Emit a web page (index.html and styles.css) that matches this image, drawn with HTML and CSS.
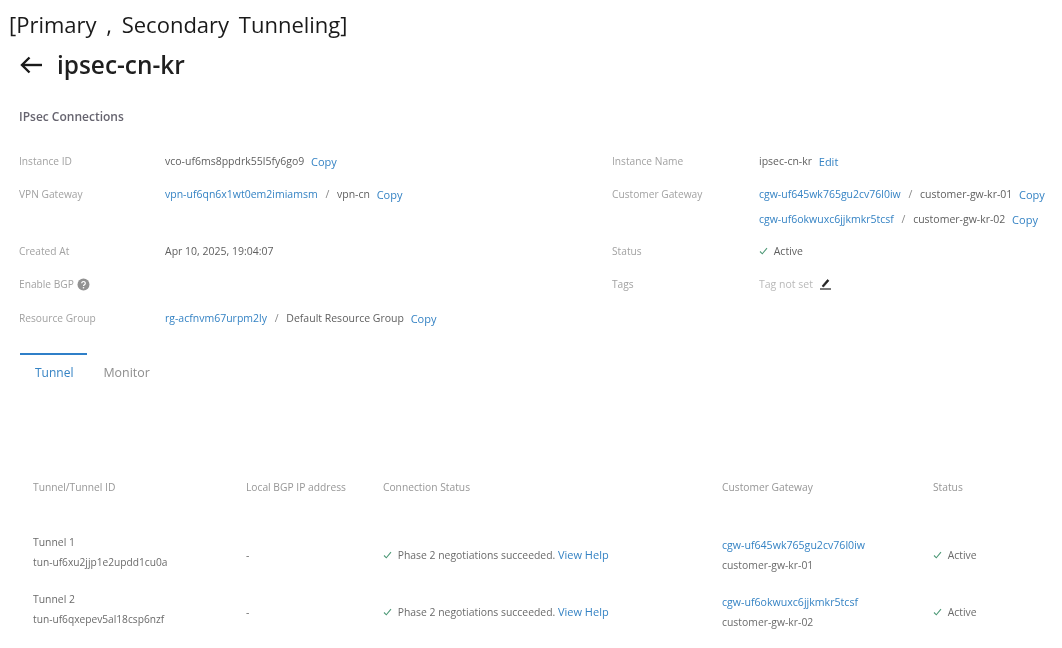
FILE: index.html
```html
<!DOCTYPE html>
<html lang="en">
<head>
  <meta charset="UTF-8" />
  <meta name="viewport" content="width=device-width, initial-scale=1.0"/>
  <title>ipsec-cn-kr</title>
  <link rel="stylesheet" href="styles.css">
</head>
<body>
  <p class="caption">[Primary , Secondary Tunneling]</p>

  <header class="page-head">
    <svg class="back-icon" width="24" height="20" viewBox="0 0 24 20" fill="none" stroke="#1a1a1a" stroke-width="2.4">
      <path d="M23 10H3"/>
      <path d="M10.500 2.500L3 10l7.500 7.500"/>
    </svg>
    <h1>ipsec-cn-kr</h1>
  </header>

  <h2 class="section-title">IPsec Connections</h2>

  <div class="details">
    <div class="row">
      <div class="label">Instance ID</div>
      <div class="value">vco-uf6ms8ppdrk55l5fy6go9 <a class="action">Copy</a></div>
      <div class="label">Instance Name</div>
      <div class="value">ipsec-cn-kr <a class="action">Edit</a></div>
    </div>
    <div class="row row-tall">
      <div class="label">VPN Gateway</div>
      <div class="value"><a>vpn-uf6qn6x1wt0em2imiamsm</a> <span class="sep">/</span> vpn-cn <a class="action">Copy</a></div>
      <div class="label">Customer Gateway</div>
      <div class="value stack">
        <div><a>cgw-uf645wk765gu2cv76l0iw</a> <span class="sep">/</span> customer-gw-kr-01 <a class="action">Copy</a></div>
        <div><a>cgw-uf6okwuxc6jjkmkr5tcsf</a> <span class="sep">/</span> customer-gw-kr-02 <a class="action">Copy</a></div>
      </div>
    </div>
    <div class="row">
      <div class="label">Created At</div>
      <div class="value">Apr 10, 2025, 19:04:07</div>
      <div class="label">Status</div>
      <div class="value">
        <svg class="check" width="9" height="8" viewBox="0 0 9 8" fill="none" stroke="#4f9a78" stroke-width="1.100"><path d="M1 4.500L3.300 6.800L8 1.200"/></svg>
        Active
      </div>
    </div>
    <div class="row row-bgp">
      <div class="label">Enable BGP
        <svg class="help" width="13" height="13" viewBox="0 0 13 13">
          <circle cx="6.500" cy="6.500" r="6" fill="#929292"/>
          <path d="M4.700 5.200a1.800 1.700 0 1 1 2.700 1.500c-.6.400-.9.600-.9 1.300" fill="none" stroke="#fff" stroke-width="1.200"/>
          <circle cx="6.500" cy="9.800" r=".8" fill="#fff"/>
        </svg>
      </div>
      <div class="value"></div>
      <div class="label">Tags</div>
      <div class="value muted">Tag not set
        <svg class="pen" width="13" height="12" viewBox="0 0 13 12" fill="none" stroke="#222">
          <path d="M3 8L8.500 1.500L10 2.800L4.500 9Z" fill="#222" stroke-width=".6"/>
          <path d="M1 11H12" stroke-width="1.200"/>
        </svg>
      </div>
    </div>
    <div class="row">
      <div class="label">Resource Group</div>
      <div class="value value-wide"><a>rg-acfnvm67urpm2ly</a> <span class="sep">/</span> Default Resource Group <a class="action">Copy</a></div>
    </div>
  </div>

  <nav class="tabs">
    <a class="tab tab-active">Tunnel</a>
    <a class="tab">Monitor</a>
  </nav>

  <table class="tunnels">
    <thead>
      <tr>
        <th class="col-name">Tunnel/Tunnel ID</th>
        <th class="col-bgp">Local BGP IP address</th>
        <th class="col-conn">Connection Status</th>
        <th class="col-gw">Customer Gateway</th>
        <th>Status</th>
      </tr>
    </thead>
    <tbody>
      <tr>
        <td class="cell-name"><div>Tunnel 1</div><div class="tunnel-id">tun-uf6xu2jjp1e2updd1cu0a</div></td>
        <td>-</td>
        <td><svg class="check" width="9" height="8" viewBox="0 0 9 8" fill="none" stroke="#4f9a78" stroke-width="1.100"><path d="M1 4.500L3.300 6.800L8 1.200"/></svg> Phase 2 negotiations succeeded. <a class="help-link">View Help</a></td>
        <td><div><a>cgw-uf645wk765gu2cv76l0iw</a></div><div>customer-gw-kr-01</div></td>
        <td><svg class="check" width="9" height="8" viewBox="0 0 9 8" fill="none" stroke="#4f9a78" stroke-width="1.100"><path d="M1 4.500L3.300 6.800L8 1.200"/></svg> Active</td>
      </tr>
      <tr>
        <td class="cell-name"><div>Tunnel 2</div><div class="tunnel-id">tun-uf6qxepev5al18csp6nzf</div></td>
        <td>-</td>
        <td><svg class="check" width="9" height="8" viewBox="0 0 9 8" fill="none" stroke="#4f9a78" stroke-width="1.100"><path d="M1 4.500L3.300 6.800L8 1.200"/></svg> Phase 2 negotiations succeeded. <a class="help-link">View Help</a></td>
        <td><div><a>cgw-uf6okwuxc6jjkmkr5tcsf</a></div><div>customer-gw-kr-02</div></td>
        <td><svg class="check" width="9" height="8" viewBox="0 0 9 8" fill="none" stroke="#4f9a78" stroke-width="1.100"><path d="M1 4.500L3.300 6.800L8 1.200"/></svg> Active</td>
      </tr>
    </tbody>
  </table>
</body>
</html>
```

FILE: styles.css
```css
body {
  margin: 0;
  height: 648px;
  overflow: hidden;
  background-color: #ffffff;
  color: #5f5f5f;
  font-family: "Open Sans", "Noto Sans", sans-serif;
  font-size: 10.5px;
  line-height: 16px;
  filter: blur(0.35px);
}
a {
  color: #3583c4;
}
.caption {
  margin: 0;
  padding: 9px 0 0 9px;
  height: 31px;
  font-size: 22px;
  line-height: 30px;
  color: #1a1a1a;
  word-spacing: 4px;
}
.page-head {
  display: flex;
  align-items: center;
  gap: 14px;
  padding: 5px 0 0 19px;
  height: 40px;
}
.page-head h1 {
  margin: 0;
  font-size: 24.4px;
  line-height: 40px;
  font-weight: 600;
  color: #1f1f1f;
}
.section-title {
  margin: 0;
  padding: 23px 0 0 19px;
  font-size: 12px;
  line-height: 18px;
  font-weight: 600;
  color: #66646f;
}
.details {
  padding: 27px 0 0 19px;
}
.row {
  display: grid;
  grid-template-columns: 146px 447px 147px 1fr;
  height: 33px;
  align-items: start;
}
.row-tall {
  height: 57px;
}
.row-bgp {
  height: 34px;
}
.label {
  font-size: 10.2px;
  color: #a2a2a2;
}
.value-wide {
  grid-column: 2 / 5;
}
.stack div {
  height: 25px;
}
.sep {
  margin: 0 5px;
  color: #888888;
}
.action {
  margin-left: 4px;
  font-size: 11px;
  vertical-align: -1px;
}
.muted {
  color: #b9b9b9;
}
.check {
  margin-right: 3px;
}
.help {
  vertical-align: -3px;
}
.pen {
  margin-left: 3px;
  vertical-align: -2px;
}
.tabs {
  display: flex;
  gap: 16px;
  margin: 10px 0 0 20px;
  height: 40px;
}
.tab {
  padding: 9px 14px 0 15px;
  font-size: 12px;
  line-height: 18px;
  color: #8d8d8d;
  border-top: 2px solid transparent;
}
.tab + .tab {
  padding: 9px 0 0;
  font-size: 12.4px;
}
.tab-active {
  color: #3583c4;
  border-top-color: #2f7fc8;
}
.tunnels {
  margin: 84px 0 0 33px;
  border-collapse: collapse;
  table-layout: fixed;
  width: 1029px;
}
.tunnels th {
  padding: 0;
  height: 20px;
  text-align: left;
  font-size: 10.25px;
  font-weight: 400;
  color: #979797;
}
.col-name { width: 213px; }
.col-bgp { width: 137px; }
.col-conn { width: 339px; }
.col-gw { width: 211px; }
.tunnels td {
  padding: 0;
  height: 57px;
  font-size: 10.4px;
  color: #6b6b6b;
}
.tunnels td a {
  font-size: 10.6px;
}
.tunnels td .help-link {
  font-size: 11px;
}
.tunnels td div {
  height: 20px;
  line-height: 20px;
}
.tunnels .tunnel-id {
  font-size: 10.2px;
}
.tunnels .cell-name {
  padding-bottom: 5px;
  height: 52px;
}
.tunnels tbody tr:first-child td {
  padding-top: 29px;
}
```
